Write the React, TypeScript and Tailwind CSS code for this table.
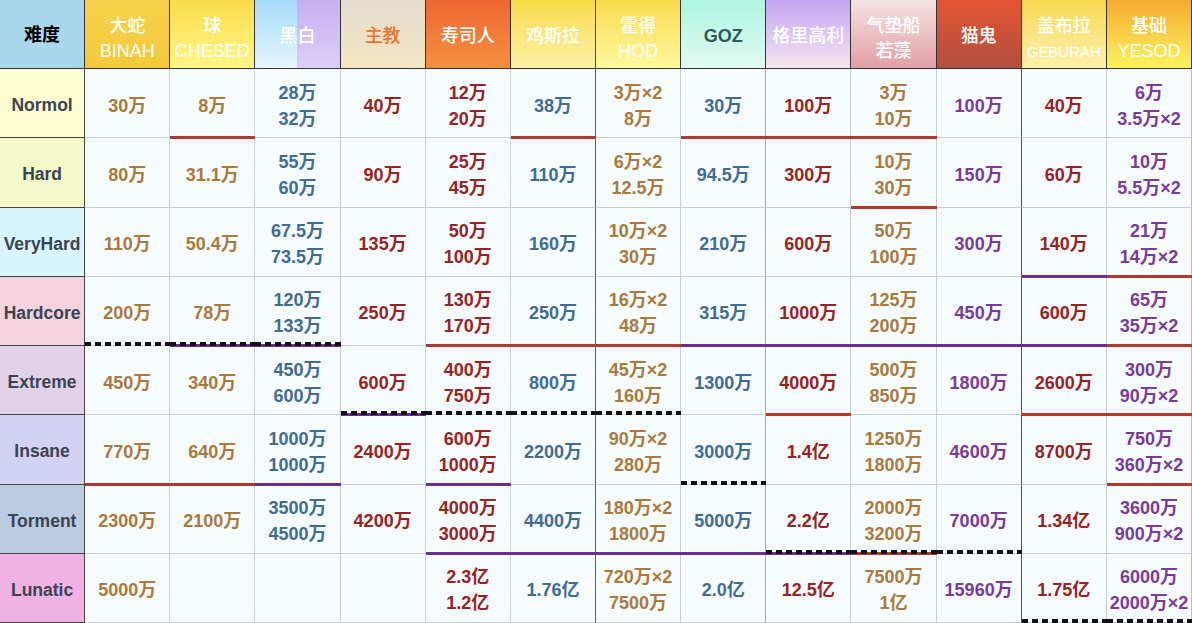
const font = "font-['Liberation_Sans','Noto_Sans_CJK_SC',sans-serif]";

type Col = {
    title: string[];
    head: string;
    headText: string;
    text: string;
    edge: string;
};

// header gradients, header text colour, body text colour, right edge colour
const cols: Col[] = [
    { title: ["大蛇", "BINAH"], head: "bg-linear-to-b from-[#f8d24c] to-[#f4c93a]", headText: "text-white", text: "text-[#a97a3c]", edge: "border-r-[#c8ccd3]" },
    { title: ["球", "CHESED"], head: "bg-linear-to-b from-[#fcdc48] to-[#fff686]", headText: "text-white", text: "text-[#a97a3c]", edge: "border-r-[#c8ccd3]" },
    { title: ["黑白"], head: "", headText: "text-white", text: "text-[#3f6c92]", edge: "border-r-[#c8ccd3]" },
    { title: ["主教"], head: "bg-linear-to-b from-[#e3dccf] to-[#f4e6c2]", headText: "text-[#e8742e]", text: "text-[#982322]", edge: "border-r-[#c8ccd3]" },
    { title: ["寿司人"], head: "bg-linear-to-b from-[#ee6634] to-[#f2903e]", headText: "text-white", text: "text-[#982322]", edge: "border-r-[#c8ccd3]" },
    { title: ["鸡斯拉"], head: "bg-linear-to-b from-[#f9dc44] to-[#fcf1a4]", headText: "text-white", text: "text-[#3f6c92]", edge: "border-r-[#b83a2e]" },
    { title: ["霍得", "HOD"], head: "bg-linear-to-b from-[#f9da4a] to-[#fff99c]", headText: "text-white", text: "text-[#a97a3c]", edge: "border-r-[#c8ccd3]" },
    { title: ["GOZ"], head: "bg-linear-to-b from-[#aef5e0] to-[#e0faf1]", headText: "text-[#2e5a56]", text: "text-[#3f6c92]", edge: "border-r-[#d68ac6]" },
    { title: ["格里高利"], head: "bg-linear-to-b from-[#c4a4f2] to-[#f5e6ee]", headText: "text-white", text: "text-[#982322]", edge: "border-r-[#c8ccd3]" },
    { title: ["气垫船", "若藻"], head: "bg-linear-to-b from-[#f3e4e4] to-[#e29ea3]", headText: "text-white", text: "text-[#a97a3c]", edge: "border-r-[#c8ccd3]" },
    { title: ["猫鬼"], head: "bg-linear-to-b from-[#e4552f] to-[#b24f3f]", headText: "text-white", text: "text-[#7a3a9a]", edge: "border-r-[#6a3890]" },
    { title: ["盖布拉", "GEBURAH"], head: "bg-linear-to-b from-[#f8d84e] to-[#fdf1aa]", headText: "text-white", text: "text-[#982322]", edge: "border-r-[#c8ccd3]" },
    { title: ["基础", "YESOD"], head: "bg-linear-to-b from-[#f4aa30] to-[#fbf45c]", headText: "text-white", text: "text-[#7a3a9a]", edge: "border-r-[#ecc030]" },
];

const levels = [
    { name: "Normol", bg: "bg-[#fefed2]" },
    { name: "Hard", bg: "bg-[#f5f8c8]" },
    { name: "VeryHard", bg: "bg-[#d8f4fc]" },
    { name: "Hardcore", bg: "bg-[#f4d2de]" },
    { name: "Extreme", bg: "bg-[#e2d2e8]" },
    { name: "Insane", bg: "bg-[#d2d2f2]" },
    { name: "Torment", bg: "bg-[#bccae2]" },
    { name: "Lunatic", bg: "bg-[#f0b2e2]" },
];

const rows: string[][] = [
    ["30万", "8万", "28万|32万", "40万", "12万|20万", "38万", "3万×2|8万", "30万", "100万", "3万|10万", "100万", "40万", "6万|3.5万×2"],
    ["80万", "31.1万", "55万|60万", "90万", "25万|45万", "110万", "6万×2|12.5万", "94.5万", "300万", "10万|30万", "150万", "60万", "10万|5.5万×2"],
    ["110万", "50.4万", "67.5万|73.5万", "135万", "50万|100万", "160万", "10万×2|30万", "210万", "600万", "50万|100万", "300万", "140万", "21万|14万×2"],
    ["200万", "78万", "120万|133万", "250万", "130万|170万", "250万", "16万×2|48万", "315万", "1000万", "125万|200万", "450万", "600万", "65万|35万×2"],
    ["450万", "340万", "450万|600万", "600万", "400万|750万", "800万", "45万×2|160万", "1300万", "4000万", "500万|850万", "1800万", "2600万", "300万|90万×2"],
    ["770万", "640万", "1000万|1000万", "2400万", "600万|1000万", "2200万", "90万×2|280万", "3000万", "1.4亿", "1250万|1800万", "4600万", "8700万", "750万|360万×2"],
    ["2300万", "2100万", "3500万|4500万", "4200万", "4000万|3000万", "4400万", "180万×2|1800万", "5000万", "2.2亿", "2000万|3200万", "7000万", "1.34亿", "3600万|900万×2"],
    ["5000万", "", "", "", "2.3亿|1.2亿", "1.76亿", "720万×2|7500万", "2.0亿", "12.5亿", "7500万|1亿", "15960万", "1.75亿", "6000万|2000万×2"],
];

// marks drawn along the bottom edge of a cell: row-col (col 1..13)
const marks: Record<string, string> = {
    "0-2": "red", "0-6": "red", "0-8": "red", "0-9": "red", "0-10": "red",
    "1-10": "red",
    "2-12": "purple", "2-13": "red",
    "3-1": "dash", "3-2": "dashPurple", "3-3": "dashPurple", "3-5": "red", "3-6": "red", "3-7": "red",
    "3-8": "purple", "3-9": "purple", "3-10": "purple", "3-11": "purple", "3-12": "purple", "3-13": "red",
    "4-4": "dashPurple", "4-5": "dash", "4-6": "dash", "4-7": "dash", "4-9": "red", "4-12": "red", "4-13": "red",
    "5-1": "red", "5-2": "red", "5-3": "purple", "5-5": "purple", "5-8": "dash", "5-13": "red",
    "6-5": "purple", "6-6": "purple", "6-7": "purple", "6-8": "purple", "6-9": "dashPurple", "6-10": "dashRed", "6-11": "dash",
    "7-12": "dash", "7-13": "dash",
};

const bar = "absolute left-0 right-[-1px] bottom-[-2px] h-[3px] z-10";
const dashes =
    "absolute left-0 right-[-1px] bottom-[-1px] h-[4px] z-20 bg-[repeating-linear-gradient(90deg,#111_0_6px,transparent_6px_10px)]";

function Mark({ kind }: { kind?: string }) {
    if (!kind) return null;
    return (
        <>
            {(kind === "red" || kind === "dashRed") && <span className={`${bar} bg-[#b3382b]`} />}
            {(kind === "purple" || kind === "dashPurple") && <span className={`${bar} bg-[#6b2f93]`} />}
            {kind.startsWith("dash") && <span className={dashes} />}
        </>
    );
}

function HeaderCell({ col }: { col: Col }) {
    if (col.title[0] === "黑白") {
        return (
            <div className="relative flex border-r border-b border-[#333]">
                <div className="w-1/2 bg-linear-to-b from-[#a6dafa] to-[#e4f6fd]" />
                <div className="w-1/2 bg-linear-to-b from-[#c6aff2] to-[#ddcff8]" />
                <div className="absolute inset-0 flex items-center justify-center pt-[4px] text-[18px] font-medium text-white">
                    黑白
                </div>
            </div>
        );
    }
    const twoLines = col.title.length > 1;
    return (
        <div
            className={`flex flex-col items-center justify-center border-b border-r border-[#333] leading-[25px] ${twoLines ? "pt-[10px]" : "pt-[5px]"} ${col.head} ${col.headText} ${col.title[0] === "鸡斯拉" ? "border-r-[#8e2a22]" : ""} ${col.title[0] === "猫鬼" ? "border-r-[#4e2a6a]" : ""}`}
        >
            {col.title.map((t) => (
                <span
                    key={t}
                    className={`${t === "GEBURAH" ? "text-[15px]" : "text-[18px]"} ${t === "GOZ" ? "font-semibold" : "font-medium"}`}
                >
                    {t}
                </span>
            ))}
        </div>
    );
}

export default function App() {
    return (
        <div className={`h-[623px] w-[1192px] overflow-hidden bg-[#f6fbfe] ${font}`}>
            <div className="grid h-full grid-cols-[repeat(14,minmax(0,1fr))] grid-rows-[repeat(9,minmax(0,1fr))]">
                <div className="flex items-center justify-center border-b border-r border-[#333] bg-[#a9d8ee] pt-[3px] text-[18px] font-bold text-black">
                    难度
                </div>
                {cols.map((col) => (
                    <HeaderCell key={col.title[0]} col={col} />
                ))}

                {rows.map((row, r) => (
                    <div key={levels[r].name} className="contents">
                        <div
                            className={`flex items-center justify-center border-b border-r border-[#444] pt-[4px] text-[17.5px] font-bold text-[#3a4452] ${levels[r].bg}`}
                        >
                            {levels[r].name}
                        </div>
                        {row.map((value, i) => {
                            const col = cols[i];
                            return (
                                <div
                                    key={i}
                                    className={`relative flex flex-col items-center justify-center border-b border-r border-b-[#c8ccd3] pt-[5px] text-[18px] font-bold leading-[26px] ${col.edge} ${col.text}`}
                                >
                                    {value.split("|").filter(Boolean).map((line) => (
                                        <span key={line} className="whitespace-nowrap">
                                            {line}
                                        </span>
                                    ))}
                                    <Mark kind={marks[`${r}-${i + 1}`]} />
                                </div>
                            );
                        })}
                    </div>
                ))}
            </div>
        </div>
    );
}
